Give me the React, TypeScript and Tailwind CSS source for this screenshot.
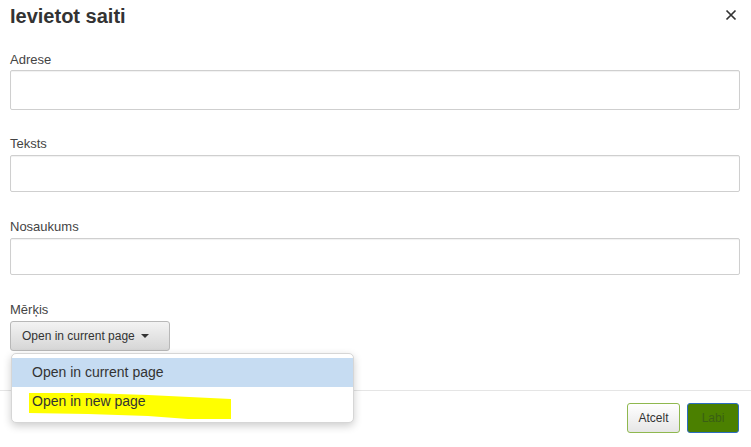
import React from "react";

export default function App() {
  return (
    <div
      className="relative w-[751px] h-[447px] overflow-hidden bg-white text-[#333]"
      style={{ fontFamily: '"Liberation Sans", Arial, sans-serif' }}
    >
      <div className="pl-[10px] pr-[11px]">
        {/* Header */}
        <div className="flex items-start justify-between h-[28px] pt-[4px]">
          <h1 className="text-[20px] leading-[24px] font-bold text-[#333]">Ievietot saiti</h1>
          <button className="mt-[5px] mr-[3px] w-[12px] h-[12px] flex items-center justify-center">
            <svg width="12" height="12" viewBox="0 0 12 12">
              <path d="M1.5 1.5 L10.5 10.5 M10.5 1.5 L1.5 10.5" stroke="#333" strokeWidth="1.7" strokeLinecap="butt" />
            </svg>
          </button>
        </div>

        {/* Adrese */}
        <div className="mt-[24px]">
          <label className="block text-[13px] leading-[15px] mb-[3px] text-[#444]">Adrese</label>
          <div className="h-[40px] border border-[#cfcfcf] rounded-[2px] bg-white shadow-[inset_0_1px_1px_rgba(0,0,0,0.06)]" />
        </div>

        {/* Teksts */}
        <div className="mt-[26px]">
          <label className="block text-[13px] leading-[15px] mb-[4px] text-[#444]">Teksts</label>
          <div className="h-[37px] border border-[#cfcfcf] rounded-[2px] bg-white shadow-[inset_0_1px_1px_rgba(0,0,0,0.06)]" />
        </div>

        {/* Nosaukums */}
        <div className="mt-[27px]">
          <label className="block text-[13px] leading-[15px] mb-[4px] text-[#444]">Nosaukums</label>
          <div className="h-[37px] border border-[#cfcfcf] rounded-[2px] bg-white shadow-[inset_0_1px_1px_rgba(0,0,0,0.06)]" />
        </div>

        {/* Mērķis */}
        <div className="mt-[27px]">
          <label className="block text-[13px] leading-[15px] mb-[4px] text-[#444]">Mērķis</label>
          <div className="relative">
            <button className="flex items-center h-[30px] w-[160px] pl-[11px] border border-[#b8b8b8] rounded-[3px] bg-gradient-to-b from-[#f3f3f3] to-[#d6d6d6] text-[12px] text-[#333]">
              <span>Open in current page</span>
              <span className="ml-[6px] w-0 h-0 border-l-[4px] border-r-[4px] border-t-[4px] border-l-transparent border-r-transparent border-t-[#333]" />
            </button>

            {/* Dropdown */}
            <div className="absolute left-[1px] top-[32px] z-20 w-[343px] bg-white border border-[#d6d6d6] rounded-[5px] shadow-[0_3px_8px_rgba(0,0,0,0.2)] pt-[4px] pb-[6px]">
              <div className="h-[29px] bg-[#c6dcf2] flex items-center pl-[20px] text-[14px] text-[#333]">
                Open in current page
              </div>
              <div className="relative h-[29px] flex items-center pl-[20px] text-[14px] text-[#333]">
                <svg
                  className="absolute left-[16px] top-[3px]"
                  width="204"
                  height="32"
                  viewBox="0 0 204 32"
                >
                  <path
                    d="M1 3 L60 3 L120 5 L203 9 L203 29 L160 29 L120 26 L60 24 L1 23 Z"
                    fill="#ffff00"
                  />
                </svg>
                <span className="relative">Open in new page</span>
              </div>
            </div>
          </div>
        </div>
      </div>

      {/* Footer */}
      <div className="mt-[39px] border-t border-[#e5e5e5] pt-[12px] pr-[12px] flex justify-end gap-[7px]">
        <button className="h-[30px] w-[53px] border border-[#8fb84f] rounded-[3px] bg-gradient-to-b from-[#ffffff] to-[#e6e6e6] text-[12px] text-[#333]">
          Atcelt
        </button>
        <button className="h-[30px] w-[52px] border border-[#2d6dc2] rounded-[3px] bg-[#4b8000] text-[12px] text-[#3a5f14]">
          Labi
        </button>
      </div>
    </div>
  );
}
